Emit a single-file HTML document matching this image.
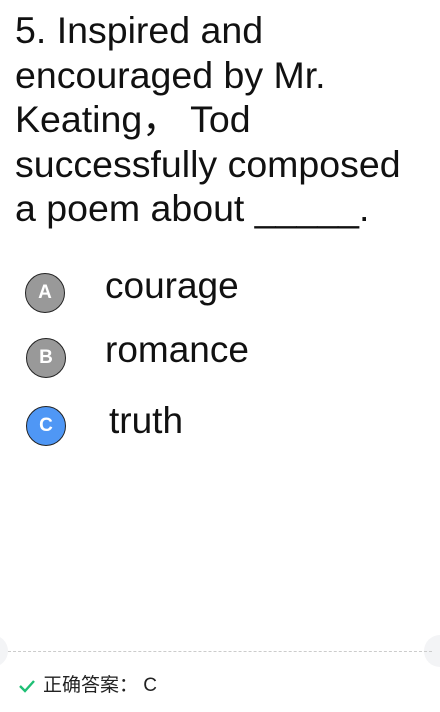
<!DOCTYPE html>
<html><head><meta charset="utf-8"><style>
body{margin:0;width:440px;height:712px;background:#fff;position:relative;overflow:hidden;font-family:"Liberation Sans","Noto Sans CJK SC",sans-serif;color:#111}
.q{position:absolute;left:15px;top:8px;width:405px;font-size:37.5px;line-height:44.5px}
.c{position:absolute;width:38px;height:38px;border:1px solid #222;border-radius:50%;color:#fff;font-size:19px;font-weight:bold;text-align:center;line-height:38px;box-sizing:content-box}
.o{position:absolute;font-size:37px;line-height:40px}
.dash{position:absolute;left:8px;right:8px;top:651px;border-top:1px dashed #ccc}
.hc{position:absolute;top:635px;width:32px;height:32px;border-radius:50%;background:#f3f4f6}
.ans{position:absolute;left:43px;top:674px;font-size:19px;line-height:24px;color:#222}
</style></head><body>
<div class="q">5. Inspired and encouraged by Mr. Keating，&nbsp;Tod successfully composed a poem about _____.</div>
<div class="c" style="left:25px;top:273px;background:#999">A</div>
<div class="o" style="left:105px;top:266px">courage</div>
<div class="c" style="left:26px;top:338px;background:#999">B</div>
<div class="o" style="left:105px;top:330px">romance</div>
<div class="c" style="left:26px;top:406px;background:#4f97f5">C</div>
<div class="o" style="left:109px;top:401px">truth</div>
<div class="hc" style="left:-24px"></div>
<div class="hc" style="right:-16px"></div>
<div class="dash"></div>
<svg style="position:absolute;left:18px;top:679px" width="18" height="14" viewBox="0 0 18 14"><path d="M2 7 L7 12 L16 2" fill="none" stroke="#1fbf75" stroke-width="2.4"/></svg>
<div class="ans">正确答案：&nbsp;C</div>
</body></html>
